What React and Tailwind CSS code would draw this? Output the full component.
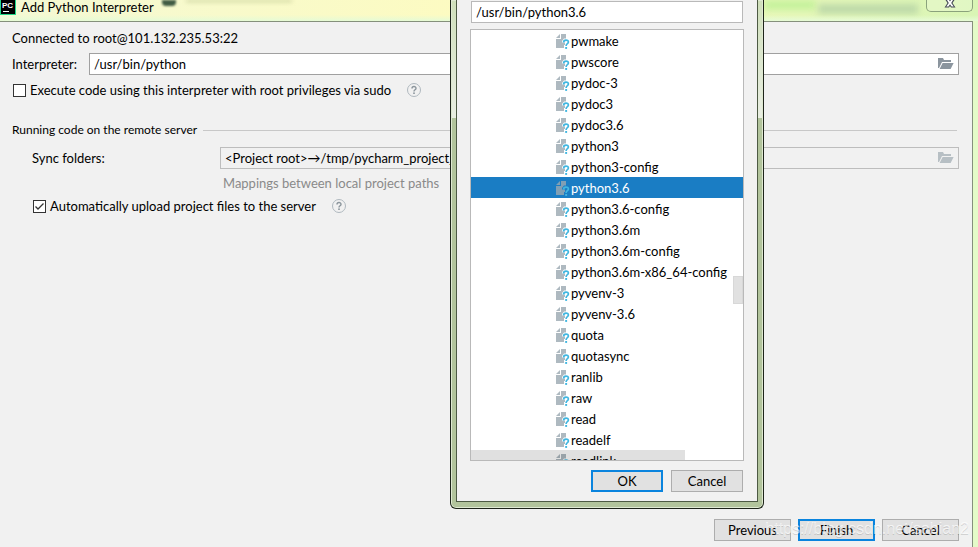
import React, { useState } from 'react';
import { clsx } from 'clsx';

const FILES = [
    'pwmake', 'pwscore', 'pydoc-3', 'pydoc3', 'pydoc3.6', 'python3', 'python3-config',
    'python3.6', 'python3.6-config', 'python3.6m', 'python3.6m-config',
    'python3.6m-x86_64-config', 'pyvenv-3', 'pyvenv-3.6', 'quota', 'quotasync',
    'ranlib', 'raw', 'read', 'readelf', 'readlink',
];

function UnknownFileIcon() {
    return (
        <svg width="14" height="16" viewBox="0 0 14 16" className="shrink-0" aria-hidden="true">
            <path d="M0 5 L4 1 V5 Z" fill="#9aa7b0" opacity="0.8" />
            <path d="M5 1 H10 V5.5 H8 L6 8 V9.5 H9 V12 H8 V15 H0 V6 H5 Z" fill="#9aa7b0" opacity="0.8" />
            <path d="M7.6 9.4 C7.6 6.4 12.4 6.4 12.4 9 C12.4 10.8 10.1 10.6 10.1 13" fill="none" stroke="#40b6e0" strokeWidth="1.7" />
            <rect x="9.2" y="14" width="1.9" height="1.9" fill="#40b6e0" />
        </svg>
    );
}

function FolderIcon() {
    return (
        <svg width="16" height="12" viewBox="0 0 16 12" aria-hidden="true">
            <path d="M0 0 H5 L6 2 H13 V4 H4 L1 10 H0 Z" fill="currentColor" />
            <path d="M4.6 5 H15.6 L12.6 11 H1.6 Z" fill="currentColor" />
        </svg>
    );
}

function HelpIcon() {
    return (
        <svg width="14" height="14" viewBox="0 0 14 14" className="ml-4 shrink-0" role="img" aria-label="Help">
            <circle cx="7" cy="7" r="6.5" fill="none" stroke="#afb8be" strokeWidth="1" />
            <path d="M5 5.6 C5 2.9 9 2.9 9 5.4 C9 6.8 7 6.7 7 8.4" fill="none" stroke="#8b959c" strokeWidth="1.4" />
            <rect x="6.2" y="9.4" width="1.6" height="1.6" fill="#8b959c" />
        </svg>
    );
}

function CheckRow({ id, label, checked, onChange, className }) {
    return (
        <div className={clsx('flex h-5 items-center', className)}>
            <input
                id={id}
                type="checkbox"
                checked={checked}
                onChange={onChange}
                className="peer h-[13px] w-[13px] shrink-0 appearance-none border border-[#333] bg-white"
            />
            <svg
                viewBox="0 0 13 13"
                className="pointer-events-none invisible -ml-[13px] h-[13px] w-[13px] shrink-0 peer-checked:visible"
                aria-hidden="true"
            >
                <path d="M2.5 6.5 L5 9 L10.5 3.5" fill="none" stroke="#333" strokeWidth="1.3" />
            </svg>
            <label htmlFor={id} className="ml-1 whitespace-nowrap">{label}</label>
            <HelpIcon />
        </div>
    );
}

function DialogButton({ primary, wide, children }) {
    return (
        <button
            type="button"
            className={clsx(
                'h-[22px] bg-[#e1e1e1] text-center leading-4',
                wide ? 'w-[77px]' : 'w-[72px]',
                primary ? 'border-2 border-[#0a84de]' : 'border border-[#adadad]'
            )}
        >
            {children}
        </button>
    );
}

function TitleBar() {
    return (
        <header className="relative flex h-[21px] items-start justify-between bg-linear-to-r from-[#f4f9d4] via-[#fdfbc0] to-[#d9f5b5]">
            <div className="absolute top-0 left-[162px] h-[6px] w-[14px] rounded-b-sm bg-[#2c4a35]/90 blur-[1px]" />
            <div className="absolute top-0 left-[186px] h-[2px] w-[106px] bg-[#c4cc96] blur-[2px]" />
            <div className="absolute top-0 left-[764px] h-[10px] w-[52px] bg-[#c6f29c] blur-[3px]" />
            <div className="absolute top-1 left-[818px] h-[10px] w-[100px] bg-[#bedaa9] blur-[3px]" />
            <div className="absolute inset-x-0 bottom-0 h-[6px] bg-linear-to-b from-transparent to-[#e6fbd6]" />
            <div className="relative flex items-start">
                <svg width="16" height="15" viewBox="0 0 16 15" aria-hidden="true">
                    <rect width="16" height="15" fill="#21d789" />
                    <rect width="14" height="14" x="1" y="0" fill="#000" />
                    <text x="2" y="8" fill="#fff" fontSize="8" fontWeight="700" fontFamily="Liberation Sans, sans-serif">PC</text>
                    <rect x="3" y="11" width="6" height="1" fill="#fff" />
                </svg>
                <h1 className="ml-[5px] leading-[14px]">Add Python Interpreter</h1>
            </div>
            <button
                type="button"
                aria-label="Close"
                className="relative mr-[5px] flex h-3 w-[47px] justify-center rounded-b-[5px] border border-t-0 border-[#8ba27c] bg-white/20"
            >
                <svg width="12" height="8" viewBox="0 0 12 8" aria-hidden="true">
                    <path d="M1.5 0 H10.5 L8.5 3 L11.5 7.5 H7 L6 6 L5 7.5 H0.5 L3.5 3 Z" fill="#444b55" />
                    <path d="M3 0 H5 L6 1.5 L7 0 H9 L7.2 3 L9.7 6.5 H7.6 L6 4.3 L4.4 6.5 H2.3 L4.8 3 Z" fill="#fff" />
                </svg>
            </button>
        </header>
    );
}

function PathField({ id, value, onChange, disabled }) {
    return (
        <div
            className={clsx(
                'flex h-[22px] min-w-0 flex-1 items-center border pr-1',
                disabled ? 'border-[#bdbdbd] text-[#b7bfc4]' : 'border-[#a0a0a0] bg-white text-[#8b959e]'
            )}
        >
            <input
                id={id}
                type="text"
                value={value}
                onChange={onChange}
                readOnly={disabled}
                className="h-5 min-w-0 flex-1 bg-transparent px-1 leading-5 text-black outline-none"
            />
            <button type="button" aria-label="Browse"><FolderIcon /></button>
        </div>
    );
}

function FileChooser() {
    const [selected, setSelected] = useState('python3.6');
    const [path, setPath] = useState('/usr/bin/python3.6');

    const pick = (name) => {
        setSelected(name);
        setPath(`/usr/bin/${name}`);
    };

    return (
        <div
            role="dialog"
            aria-label="Select interpreter"
            className="absolute top-0 left-[450px] w-[314px] rounded-b-[6px] border border-t-0 border-[#1e241a] bg-linear-to-b from-[#cfdfba] from-0% via-[#e9eee2] via-[118px] to-[#b2c49c] to-[118px] px-[5px] pb-[6px] inset-ring inset-ring-[#dfe9d2]"
        >
            <div className="border border-t-0 border-[#4d5a44] bg-[#f1f1f1] px-[13px] pt-px pb-[9px]">
                <div className="px-px">
                    <input
                        type="text"
                        aria-label="Path"
                        value={path}
                        onChange={(e) => setPath(e.target.value)}
                        className="block h-[22px] w-full border border-[#b9b9b9] bg-white px-1 outline-none"
                    />
                </div>
                <div className="relative mt-[6px] h-[432px] overflow-hidden border border-[#b9b9b9] bg-white">
                    <ul>
                        {FILES.map((name) => (
                            <li key={name}>
                                <button
                                    type="button"
                                    onClick={() => pick(name)}
                                    className={clsx(
                                        'flex h-[21px] w-full items-center gap-px pl-[85px] text-left',
                                        selected === name && 'bg-[#1a7dc4] text-white'
                                    )}
                                >
                                    <UnknownFileIcon />
                                    {name}
                                </button>
                            </li>
                        ))}
                    </ul>
                    {/* overlay scroll thumbs */}
                    <div className="absolute top-[246px] right-0 h-7 w-[10px] border border-[#d8d8d8] bg-[#e1e1e1]" />
                    <div className="absolute bottom-0 left-0 h-[10px] w-[214px] bg-black/12" />
                </div>
                <div className="mt-[9px] flex justify-end gap-2 pr-px">
                    <DialogButton primary>OK</DialogButton>
                    <DialogButton>Cancel</DialogButton>
                </div>
            </div>
        </div>
    );
}

export default function App() {
    const [interpreter, setInterpreter] = useState('/usr/bin/python');
    const [sudo, setSudo] = useState(false);
    const [upload, setUpload] = useState(true);

    return (
        <div className="relative flex min-h-screen flex-col overflow-hidden bg-[#e4fbc8] font-['Lato','Noto_Sans_CJK_SC',sans-serif] text-[13px] leading-5 text-black">
            <TitleBar />
            <main className="mr-[5px] flex flex-1 flex-col border-t border-r border-[#85907c] bg-[#f1f1f1] pt-[6px] pr-[13px] pb-[6px] pl-3">
                <p>Connected to root@101.132.235.53:22</p>
                <div className="mt-[5px] flex items-center">
                    <label htmlFor="interpreter" className="w-[77px]">Interpreter:</label>
                    <PathField
                        id="interpreter"
                        value={interpreter}
                        onChange={(e) => setInterpreter(e.target.value)}
                    />
                </div>
                <CheckRow
                    id="sudo"
                    label="Execute code using this interpreter with root privileges via sudo"
                    checked={sudo}
                    onChange={(e) => setSudo(e.target.checked)}
                    className="mt-[5px] pl-px"
                />

                <div className="mt-5 flex items-center gap-[6px]">
                    <h2 className="text-[12px] leading-5">Running code on the remote server</h2>
                    <div className="mr-[2px] h-px flex-1 bg-[#c8c8c8]" />
                </div>
                <div className="mt-[7px] flex items-center pl-5">
                    <label htmlFor="sync" className="w-[188px]">Sync folders:</label>
                    <PathField id="sync" value="<Project root>→/tmp/pycharm_project_22" disabled />
                </div>
                <p className="mt-1 ml-[211px] text-[#8a8a8a]">Mappings between local project paths</p>
                <CheckRow
                    id="upload"
                    label="Automatically upload project files to the server"
                    checked={upload}
                    onChange={(e) => setUpload(e.target.checked)}
                    className="mt-[3px] pl-[21px]"
                />

                <footer className="mt-auto flex justify-end gap-[7px]">
                    <DialogButton wide>Previous</DialogButton>
                    <DialogButton wide primary>Finish</DialogButton>
                    <DialogButton wide>Cancel</DialogButton>
                </footer>
            </main>
            <FileChooser />
            <span className="pointer-events-none absolute right-[9px] bottom-2 font-['Liberation_Sans',sans-serif] text-[16px] text-white/70 text-shadow-2xs">
                https://blog.csdn.net/sabian2
            </span>
        </div>
    );
}
